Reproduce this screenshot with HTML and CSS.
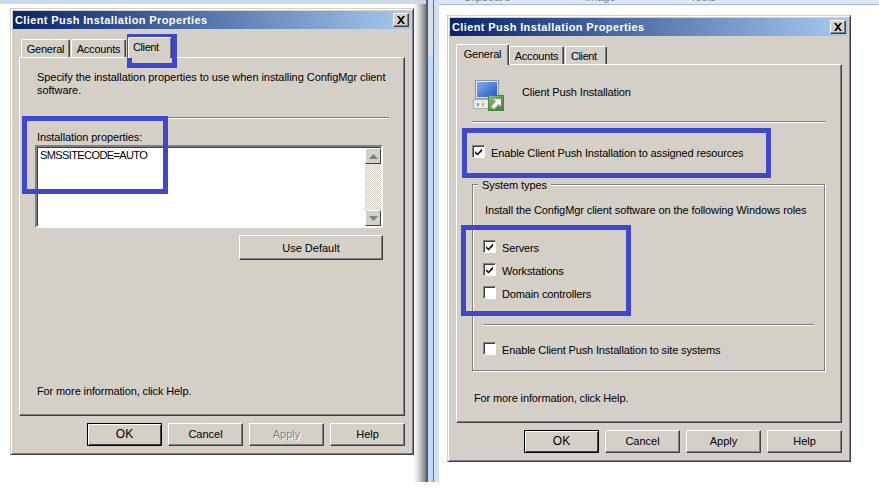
FILE: index.html
```html
<!DOCTYPE html>
<html lang="en">
<head>
<meta charset="utf-8">
<title>Client Push Installation Properties</title>
<link rel="stylesheet" href="styles.css">
</head>
<body>
<div class="desktop">
  <div class="backdrop">
    <div class="back-left"><div class="strip"></div><div class="shadow"></div></div>
    <div class="edge-a"></div>
    <div class="edge-b"></div>
    <div class="back-right">
      <div class="ribbon"><span class="rib-a">Clipboard</span><span class="rib-b">Image</span><span class="rib-c">Tools</span></div>
    </div>
  </div>

  <section class="dialog dialog-left">
    <header class="titlebar"><span>Client Push Installation Properties</span>
      <button class="close"><svg width="10" height="8" viewBox="0 0 10 8"><path d="M1 0h2l2 2.5L7 0h2L6 4l3 4H7L5 5.5 3 8H1l3-4z" fill="#000"/></svg></button>
    </header>
    <div class="tabs">
      <div class="tab tab-general">General</div>
      <div class="tab tab-accounts">Accounts</div>
      <div class="tab tab-client active">Client</div>
    </div>
    <div class="panel">
      <p class="intro">Specify the installation properties to use when installing ConfigMgr client software.</p>
      <div class="sep sep-left"></div>
      <label class="prop-label">Installation properties:</label>
      <div class="textbox">
        <div class="textbox-text">SMSSITECODE=AUTO</div>
        <div class="scrollbar">
          <div class="sb-btn"><svg width="9" height="5" viewBox="0 0 9 5"><path d="M4.5 0L9 5H0z" fill="#808080"/></svg></div>
          <div class="sb-track"></div>
          <div class="sb-btn"><svg width="9" height="5" viewBox="0 0 9 5"><path d="M0 0h9L4.500 5z" fill="#808080"/></svg></div>
        </div>
      </div>
      <div class="default-row"><button class="btn btn-default">Use Default</button></div>
      <p class="more">For more information, click Help.</p>
    </div>
    <div class="actions">
      <button class="btn primary">OK</button>
      <button class="btn">Cancel</button>
      <button class="btn disabled">Apply</button>
      <button class="btn">Help</button>
    </div>
  </section>

  <section class="dialog dialog-right">
    <header class="titlebar"><span>Client Push Installation Properties</span>
      <button class="close"><svg width="10" height="8" viewBox="0 0 10 8"><path d="M1 0h2l2 2.5L7 0h2L6 4l3 4H7L5 5.5 3 8H1l3-4z" fill="#000"/></svg></button>
    </header>
    <div class="tabs">
      <div class="tab r-general active">General</div>
      <div class="tab r-accounts">Accounts</div>
      <div class="tab r-client">Client</div>
    </div>
    <div class="panel">
      <div class="head">
        <svg class="pc-icon" width="32" height="32" viewBox="0 0 32 32">
          <defs>
            <linearGradient id="scr" x1="0" y1="0" x2="1" y2="1"><stop offset="0" stop-color="#86aef0"/><stop offset="1" stop-color="#1d55c8"/></linearGradient>
            <linearGradient id="grn" x1="0" y1="0" x2="1" y2="1"><stop offset="0" stop-color="#8dbb7c"/><stop offset="1" stop-color="#3f7d3a"/></linearGradient>
          </defs>
          <rect x="2.500" y="0.500" width="23" height="18" fill="#dfe5ee" stroke="#8d99a8"/>
          <rect x="4" y="2" width="20" height="15" fill="url(#scr)"/>
          <rect x="0.500" y="19.500" width="20" height="9" fill="#e6e9ee" stroke="#a8aeb6"/>
          <rect x="4" y="23" width="2" height="3" fill="#5ccf4e"/>
          <rect x="9" y="23" width="2" height="3" fill="#f2b11f"/>
          <rect x="15.500" y="15.500" width="15" height="15" fill="url(#grn)" stroke="#4f8248"/>
          <path d="M18 27l5-6-3-2h8v8l-2-3-5 5z" fill="#f2f5ef"/>
        </svg>
        <span>Client Push Installation</span>
      </div>
      <div class="sep sep-right"></div>
      <div class="check top-check"><span class="box on"><svg width="9" height="9" viewBox="0 0 9 9"><path d="M1 4l2.500 2.500L8 1.500v2.500L3.500 8.500 1 6z" fill="#000"/></svg></span>Enable Client Push Installation to assigned resources</div>
      <div class="group">
        <span class="legend">System types</span>
        <p class="group-intro">Install the ConfigMgr client software on the following Windows roles</p>
        <div class="check"><span class="box on"><svg width="9" height="9" viewBox="0 0 9 9"><path d="M1 4l2.500 2.500L8 1.500v2.500L3.500 8.500 1 6z" fill="#000"/></svg></span>Servers</div>
        <div class="check"><span class="box on"><svg width="9" height="9" viewBox="0 0 9 9"><path d="M1 4l2.500 2.500L8 1.500v2.500L3.500 8.500 1 6z" fill="#000"/></svg></span>Workstations</div>
        <div class="check"><span class="box"></span>Domain controllers</div>
        <div class="sep sep-group"></div>
        <div class="check"><span class="box"></span>Enable Client Push Installation to site systems</div>
      </div>
      <p class="more">For more information, click Help.</p>
    </div>
    <div class="actions">
      <button class="btn primary">OK</button>
      <button class="btn">Cancel</button>
      <button class="btn">Apply</button>
      <button class="btn">Help</button>
    </div>
  </section>

  <div class="mark mark-client"></div>
  <div class="mark mark-props"></div>
  <div class="mark mark-enable"></div>
  <div class="mark mark-roles"></div>
</div>
</body>
</html>
```
FILE: styles.css
```css
* { box-sizing: border-box; }
html, body { margin: 0; padding: 0; background: #fff; }
body { width: 879px; height: 496px; overflow: hidden; font-family: "Liberation Sans", Arial, sans-serif; font-size: 11px; line-height: 13px; color: #000; }
p { margin: 0; }
button { font: inherit; color: inherit; padding: 0; margin: 0; }

.desktop { position: relative; width: 879px; height: 496px; background: #fff; overflow: hidden; }

.backdrop { display: flex; height: 482px; }
.back-left { width: 426px; display: flex; flex-direction: column; }
.strip { height: 4px; background: #ccd7e7; }
.shadow { flex: 1; background: linear-gradient(90deg, #fff 0, #fff 413px, #eee 416px, #bbb 421px, #777 426px); }
.edge-a { width: 8px; border-left: 2px solid #56606c; border-right: 1px solid #6b7480; background: linear-gradient(180deg, #d3dfec 0, #d3dfec 57px, #b9d9fa 58px, #b9d9fa 100%); }
.edge-b { width: 5px; background: #d2e0f2; }
.back-right { flex: 1; background: #fff; }
.ribbon { height: 5px; background: #dce8f6; border-bottom: 1px solid #a7b7cd; position: relative; overflow: hidden; color: #7a8594; line-height: 13px; }
.ribbon span { position: absolute; top: -9px; }
.rib-a { left: 24px; }
.rib-b { left: 146px; }
.rib-c { left: 251px; }

.dialog { position: absolute; width: 404px; height: 447px; padding: 2px; background: #d4d0c8; border: 1px solid; border-color: #d4d0c8 #404040 #404040 #d4d0c8; box-shadow: inset 1px 1px 0 #fff, inset -1px -1px 0 #808080; display: flex; flex-direction: column; }
.dialog-left { left: 10px; top: 8px; }
.dialog-right { left: 447px; top: 15px; }

.titlebar { height: 18px; flex: none; display: flex; align-items: center; justify-content: space-between; padding: 0 2px; background: linear-gradient(90deg, #0a246a, #a6caf0); color: #fff; font-weight: bold; font-size: 11px; letter-spacing: 0.385px; }
.close { width: 16px; height: 14px; display: flex; align-items: center; justify-content: center; background: #d4d0c8; border: 1px solid; border-color: #fff #404040 #404040 #fff; box-shadow: inset -1px -1px 0 #808080; }

.tabs { height: 28px; flex: none; display: flex; align-items: flex-end; position: relative; z-index: 1; letter-spacing: -0.2px; }
.tab { height: 18px; padding: 3px 0 0; text-align: center; background: #d4d0c8; border: 1px solid; border-color: #fff #404040 transparent #fff; border-bottom: 0; border-radius: 2px 2px 0 0; box-shadow: inset -1px 0 0 #808080; }
.tab.active { height: 21px; margin-bottom: -1px; }
.tab-general { width: 49px; margin-left: 8px; }
.tab-accounts { width: 55px; margin-left: 1px; }
.tab-client { width: 44px; margin-left: 2px; text-align: left; padding-left: 4px; letter-spacing: -0.4px; }
.r-general { width: 53px; margin-left: 6px; }
.r-accounts { width: 55px; }
.r-client { width: 42px; margin-left: 1px; text-align: left; padding-left: 5px; letter-spacing: -0.4px; }

.panel { width: 386px; height: 359px; margin: 0 6px; flex: none; background: #d4d0c8; border: 1px solid; border-color: #fff #404040 #404040 #fff; box-shadow: inset -1px -1px 0 #808080; display: flex; flex-direction: column; padding-left: 17px; letter-spacing: -0.1px; }
.intro { width: 352px; margin-top: 13px; letter-spacing: -0.05px; }
.sep { height: 2px; border-top: 1px solid #808080; border-bottom: 1px solid #fff; flex: none; }
.sep-left { width: 352px; margin-top: 20px; }
.prop-label { margin-top: 12px; }
.textbox { width: 348px; height: 83px; margin: 1px 0 0 -2px; border: 2px solid; border-color: #808080 #fff #fff #808080; box-shadow: inset 1px 1px 0 #404040; background: #fff; display: flex; justify-content: space-between; }
.textbox-text { padding: 2px 0 0 3px; letter-spacing: -0.6px; }
.scrollbar { width: 16px; margin: 1px 0 0; display: flex; flex-direction: column; }
.sb-btn { height: 16px; flex: none; display: flex; align-items: center; justify-content: center; background: #d4d0c8; border: 1px solid; border-color: #fff #404040 #404040 #fff; }
.sb-track { flex: 1; background: repeating-conic-gradient(#d4d0c8 0 25%, #fff 0 50%) 0 0 / 2px 2px; }
.default-row { display: flex; justify-content: flex-end; width: 346px; margin-top: 7px; }
.btn { width: 75px; height: 23px; background: #d4d0c8; border: 1px solid; border-color: #fff #404040 #404040 #fff; box-shadow: inset -1px -1px 0 #808080; text-align: center; }
.btn-default { width: 144px; height: 25px; padding-top: 1px; }
.btn.primary { border-color: #000; box-shadow: inset 1px 1px 0 #fff, inset -1px -1px 0 #404040; font-size: 12px; }
.btn.disabled { color: #808080; text-shadow: 1px 1px 0 #fff; }
.more { letter-spacing: -0.12px; margin-top: auto; margin-bottom: 17px; }

.actions { display: flex; justify-content: flex-end; gap: 6px; margin: 7px 6px 0 0; flex: none; }

.head { display: flex; align-items: flex-start; height: 30px; margin: 15px 0 0 -1px; }
.head span { margin: 6px 0 0 17px; letter-spacing: -0.13px; }
.pc-icon { flex: none; }
.sep-right { width: 354px; margin: 11px 0 0 -2px; }
.check { display: flex; align-items: center; height: 23px; padding-top: 2px; letter-spacing: -0.14px; }
.top-check { margin: 23px 0 0 -2px; height: 13px; }
.box { width: 13px; height: 13px; margin: 0 6px 4px 0; flex: none; background: #fff; border: 1px solid; border-color: #808080 #fff #fff #808080; box-shadow: inset 1px 1px 0 #404040; display: flex; align-items: center; justify-content: center; }
.group { position: relative; width: 353px; height: 187px; margin: 25px 0 0 -2px; padding: 19px 0 0 10px; border: 1px solid #808080; box-shadow: 1px 1px 0 #fff, inset 1px 1px 0 #fff; }
.legend { position: absolute; left: 5px; top: -6px; padding: 0 4px; background: #d4d0c8; }
.group-intro { margin: 0 0 19px 2px; white-space: nowrap; }
.sep-group { width: 330px; margin: 19px 0 12px 1px; }

.mark { position: absolute; border: 5px solid #3f48cc; }
.mark-client { left: 127px; top: 34px; width: 50px; height: 34px; }
.mark-props { left: 22px; top: 116px; width: 146px; height: 78px; }
.mark-enable { left: 462px; top: 128px; width: 309px; height: 50px; }
.mark-roles { left: 461px; top: 225px; width: 170px; height: 91px; }
```
